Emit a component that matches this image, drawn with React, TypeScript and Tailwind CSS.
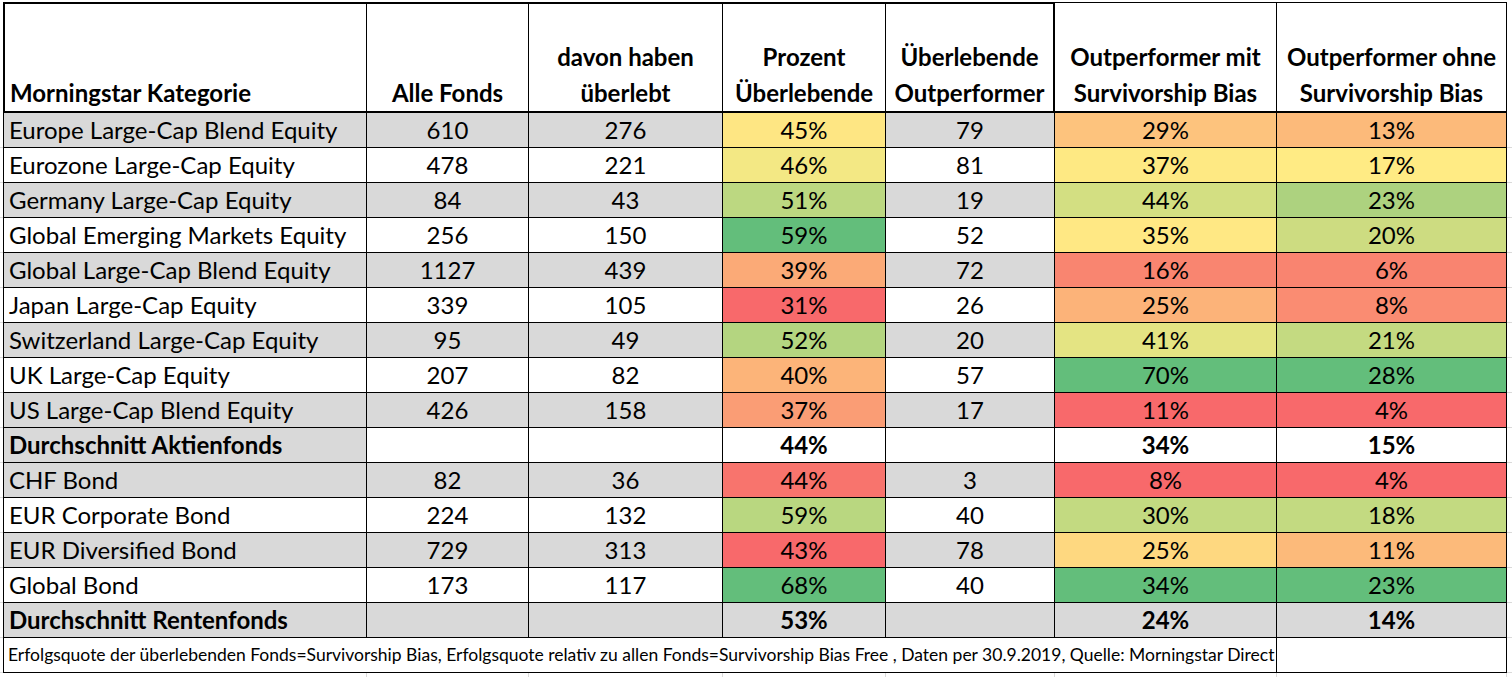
import React from "react";

type Cell = [string, string];
type Row = {
  name: string;
  a: string;
  b: string;
  p: Cell;
  o: string;
  m: Cell;
  w: Cell;
  bg: string;
  bold?: boolean;
  firstOnly?: boolean;
};

const G = "bg-[#d9d9d9]";
const W = "bg-white";

const rows: Row[] = [
  { name: "Europe Large-Cap Blend Equity", a: "610", b: "276", p: ["45%", "bg-[#fee683]"], o: "79", m: ["29%", "bg-[#fdc37d]"], w: ["13%", "bg-[#fcba7a]"], bg: G },
  { name: "Eurozone Large-Cap Equity", a: "478", b: "221", p: ["46%", "bg-[#f3e884]"], o: "81", m: ["37%", "bg-[#fee983]"], w: ["17%", "bg-[#ffeb84]"], bg: W },
  { name: "Germany Large-Cap Equity", a: "84", b: "43", p: ["51%", "bg-[#bcd881]"], o: "19", m: ["44%", "bg-[#d3df82]"], w: ["23%", "bg-[#add27f]"], bg: G },
  { name: "Global Emerging Markets Equity", a: "256", b: "150", p: ["59%", "bg-[#63be7b]"], o: "52", m: ["35%", "bg-[#ffe884]"], w: ["20%", "bg-[#cddc81]"], bg: W },
  { name: "Global Large-Cap Blend Equity", a: "1127", b: "439", p: ["39%", "bg-[#fbaa77]"], o: "72", m: ["16%", "bg-[#f98570]"], w: ["6%", "bg-[#f98470]"], bg: G },
  { name: "Japan Large-Cap Equity", a: "339", b: "105", p: ["31%", "bg-[#f8696b]"], o: "26", m: ["25%", "bg-[#fcb379]"], w: ["8%", "bg-[#fa8c72]"], bg: W },
  { name: "Switzerland Large-Cap Equity", a: "95", b: "49", p: ["52%", "bg-[#b4d580]"], o: "20", m: ["41%", "bg-[#e4e483]"], w: ["21%", "bg-[#c4da81]"], bg: G },
  { name: "UK Large-Cap Equity", a: "207", b: "82", p: ["40%", "bg-[#fcb479]"], o: "57", m: ["70%", "bg-[#63be7b]"], w: ["28%", "bg-[#63be7b]"], bg: W },
  { name: "US Large-Cap Blend Equity", a: "426", b: "158", p: ["37%", "bg-[#fa9d75]"], o: "17", m: ["11%", "bg-[#f8696b]"], w: ["4%", "bg-[#f8696b]"], bg: G },
  { name: "Durchschnitt Aktienfonds", a: "", b: "", p: ["44%", W], o: "", m: ["34%", W], w: ["15%", W], bg: G, bold: true, firstOnly: true },
  { name: "CHF Bond", a: "82", b: "36", p: ["44%", "bg-[#f8746d]"], o: "3", m: ["8%", "bg-[#f8696b]"], w: ["4%", "bg-[#f8696b]"], bg: G },
  { name: "EUR Corporate Bond", a: "224", b: "132", p: ["59%", "bg-[#b9d780]"], o: "40", m: ["30%", "bg-[#c3da81]"], w: ["18%", "bg-[#c3da81]"], bg: W },
  { name: "EUR Diversified Bond", a: "729", b: "313", p: ["43%", "bg-[#f8696b]"], o: "78", m: ["25%", "bg-[#fed880]"], w: ["11%", "bg-[#fcba7a]"], bg: G },
  { name: "Global Bond", a: "173", b: "117", p: ["68%", "bg-[#63be7b]"], o: "40", m: ["34%", "bg-[#63be7b]"], w: ["23%", "bg-[#63be7b]"], bg: W },
  { name: "Durchschnitt Rentenfonds", a: "", b: "", p: ["53%", G], o: "", m: ["24%", G], w: ["14%", G], bg: G, bold: true },
];

const cell = "box-border h-[35px] border-r border-b border-black flex items-center justify-center";

function HeaderCell({ w, lines, left, extra }: { w: string; lines: string[]; left?: boolean; extra: string }) {
  return (
    <div className={`box-border h-[111px] border-black border-b-2 flex flex-col justify-end font-bold ${w} ${extra} ${left ? "items-start pl-[5px]" : "items-center"}`}>
      {lines.map((l) => (
        <div key={l} className="leading-[36px] whitespace-nowrap">
          {l}
        </div>
      ))}
    </div>
  );
}

export default function App() {
  return (
    <div className="w-[1512px] h-[677px] overflow-hidden bg-white pt-[2px] text-black font-['Lato','Noto_Sans',sans-serif] text-[24px]">
      <div className="flex">
        <div className="w-[3px] shrink-0" />
        <HeaderCell w="w-[364px]" lines={["Morningstar Kategorie"]} left extra="border-l-2 border-t-2 border-r" />
        <HeaderCell w="w-[162px]" lines={["Alle Fonds"]} extra="border-t-2 border-r" />
        <HeaderCell w="w-[194px]" lines={["davon haben", "überlebt"]} extra="border-t-2 border-r" />
        <HeaderCell w="w-[163px]" lines={["Prozent", "Überlebende"]} extra="border-t-2 border-r" />
        <HeaderCell w="w-[169px]" lines={["Überlebende", "Outperformer"]} extra="border-t-2 border-r-2" />
        <HeaderCell w="w-[222px]" lines={["Outperformer mit", "Survivorship Bias"]} extra="border-t border-r" />
        <HeaderCell w="w-[230px]" lines={["Outperformer ohne", "Survivorship Bias"]} extra="border-t border-r" />
        <div className="flex-1" />
      </div>
      {rows.map((r) => {
        const rest = r.firstOnly ? W : r.bg;
        const b = r.bold ? "font-bold" : "";
        return (
          <div key={r.name} className="flex">
            <div className="w-[3px] shrink-0 border-b border-[#dadada]" />
            <div className={`${cell} w-[364px] border-l !justify-start pl-[5px] whitespace-nowrap ${r.bg} ${b}`}>{r.name}</div>
            <div className={`${cell} w-[162px] ${rest}`}>{r.a}</div>
            <div className={`${cell} w-[194px] ${rest}`}>{r.b}</div>
            <div className={`${cell} w-[163px] ${r.p[1]} ${b}`}>{r.p[0]}</div>
            <div className={`${cell} w-[169px] ${rest}`}>{r.o}</div>
            <div className={`${cell} w-[222px] ${r.m[1]} ${b}`}>{r.m[0]}</div>
            <div className={`${cell} w-[230px] ${r.w[1]} ${b}`}>{r.w[0]}</div>
            <div className="flex-1 border-b border-[#dadada]" />
          </div>
        );
      })}
      <div className="flex">
        <div className="w-[3px] shrink-0 border-b border-[#dadada]" />
        <div className="box-border h-[35px] w-[1274px] border-l border-r border-b border-black flex items-center pl-[4px] whitespace-nowrap overflow-hidden text-[17.5px]">
          Erfolgsquote der überlebenden Fonds=Survivorship Bias, Erfolgsquote relativ zu allen Fonds=Survivorship Bias Free , Daten per 30.9.2019, Quelle: Morningstar Direct
        </div>
        <div className="box-border h-[35px] w-[230px] border-r border-b border-black" />
        <div className="flex-1 border-b border-[#dadada]" />
      </div>
      <div className="flex h-[10px]">
        <div className="w-[3px] shrink-0" />
        <div className="box-border w-[364px] border-r border-[#dadada]" />
        <div className="box-border w-[162px] border-r border-[#dadada]" />
        <div className="box-border w-[194px] border-r border-[#dadada]" />
        <div className="box-border w-[163px] border-r border-[#dadada]" />
        <div className="box-border w-[169px] border-r border-[#dadada]" />
        <div className="box-border w-[222px] border-r border-[#dadada]" />
        <div className="box-border w-[230px] border-r border-[#dadada]" />
      </div>
    </div>
  );
}
